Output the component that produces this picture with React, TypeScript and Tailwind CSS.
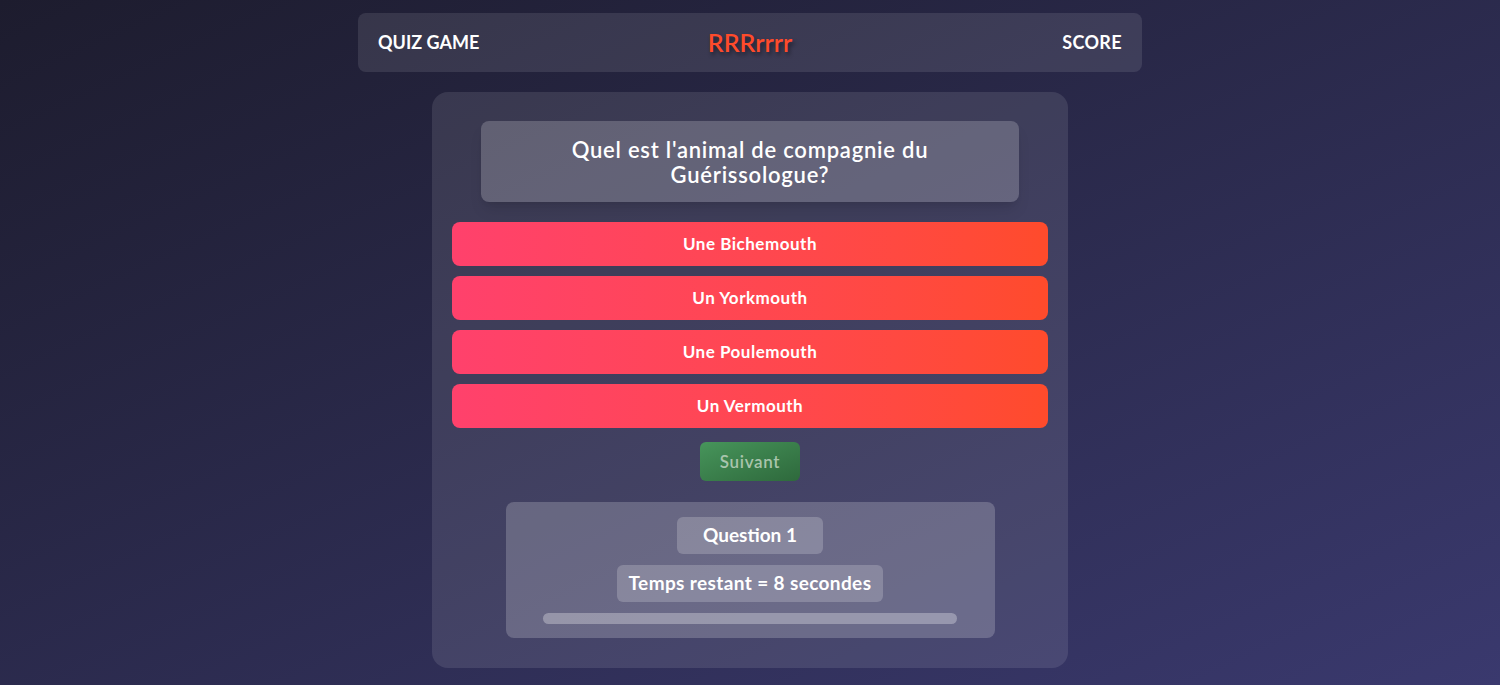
import React from "react";

const answers = ["Une Bichemouth", "Un Yorkmouth", "Une Poulemouth", "Un Vermouth"];

export default function App() {
  return (
    <div
      className="min-h-[685px] w-full bg-gradient-to-br from-[#1d1c2e] to-[#3a396e] text-white flex flex-col items-center pt-[13px]"
      style={{ fontFamily: "Lato, 'Open Sans', sans-serif" }}
    >
      {/* Header */}
      <header className="w-[784px] h-[59px] rounded-lg bg-white/10 grid grid-cols-3 items-center px-5">
        <span className="text-[18px] font-bold">QUIZ GAME</span>
        <span className="text-center text-[25px] font-semibold text-[#ff4b2b] [text-shadow:2px_3px_4px_rgba(0,0,0,0.45)]">
          RRRrrrr
        </span>
        <span className="text-right text-[18px] font-bold tracking-[0.02em]">SCORE</span>
      </header>

      {/* Quiz card */}
      <main className="mt-5 w-[636px] rounded-2xl bg-white/10 px-5 pt-[29px] pb-[30px] flex flex-col items-center">
        <div className="w-[538px] h-[81px] rounded-lg bg-white/20 shadow-lg flex items-center justify-center px-10 text-center text-[22px] font-semibold leading-[25px] tracking-[0.035em]">
          Quel est l'animal de compagnie du Guérissologue?
        </div>

        <div className="mt-5 w-full flex flex-col gap-[10px]">
          {answers.map((a) => (
            <button
              key={a}
              className="h-[44px] w-full rounded-lg bg-gradient-to-r from-[#ff416c] to-[#ff4b2b] text-[17px] font-bold tracking-[0.03em]"
            >
              {a}
            </button>
          ))}
        </div>

        <button className="mt-[14px] w-[100px] h-[39px] rounded-md bg-gradient-to-br from-[#47955b] to-[#2e693c] text-[17px] font-semibold tracking-[0.04em] text-[#a9c5ad]">
          Suivant
        </button>

        {/* Info */}
        <div className="mt-[21px] w-[489px] rounded-lg bg-white/20 pt-[15px] pb-[14px] flex flex-col items-center gap-[11px]">
          <div className="w-[146px] h-[37px] rounded-md bg-white/20 flex items-center justify-center text-[19px] font-bold">
            Question 1
          </div>
          <div className="h-[37px] px-3 rounded-md bg-white/20 flex items-center justify-center text-[19px] font-bold tracking-[0.02em]">
            Temps restant = 8 secondes
          </div>
          <div className="w-[414px] h-[11px] rounded-full bg-white/30" />
        </div>
      </main>
    </div>
  );
}
